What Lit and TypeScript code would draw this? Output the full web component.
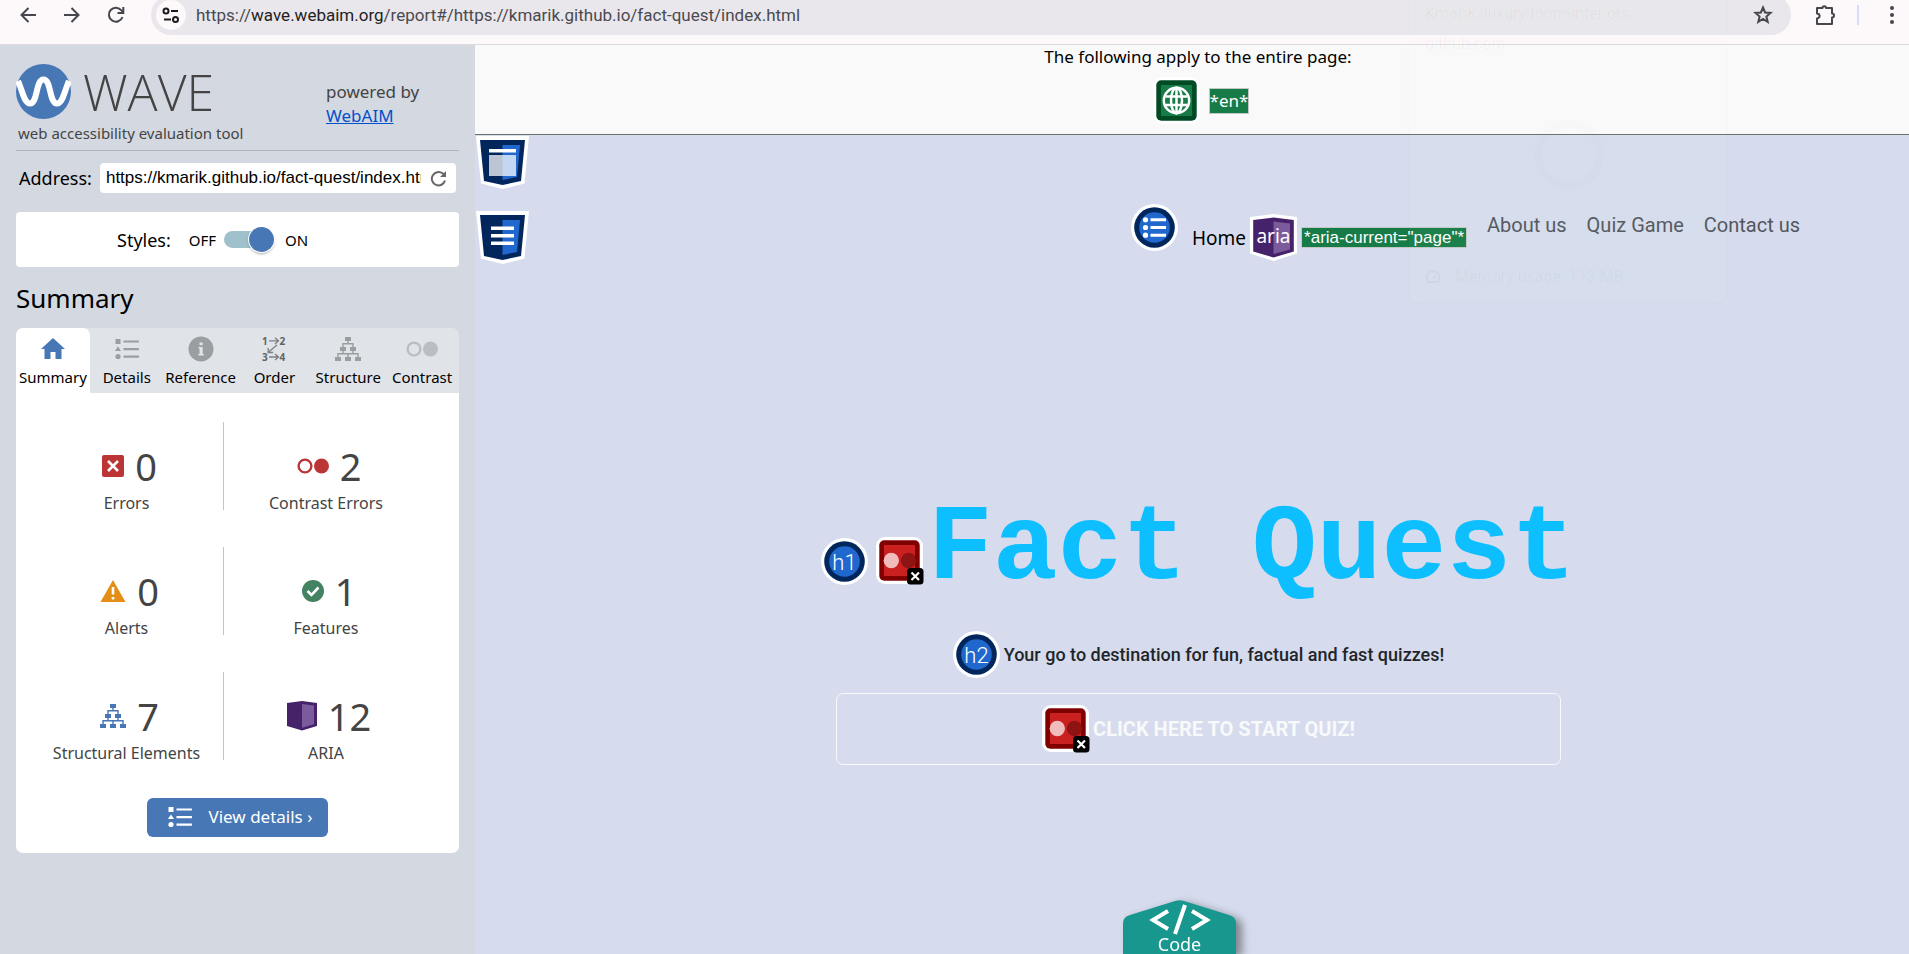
import { LitElement, html, svg, css } from "lit";
import { customElement, property, state } from "lit/decorators.js";

const listShapes = svg`
  <path d="M0 0h5v5H0zM2.5 7.5L5.6 12H-.6z" /><circle cx="2.5" cy="17.5" r="2.6" />
  <path d="M8 1.4h15.400v2.200H8zM8 9h15.400v2.200H8zM8 16.600h15.400v2.200H8z" />`;

const treeShapes = svg`
  <path d="M10 0h6v4h-6zM5 10h6v4H5zM15 10h6v4h-6zM0 20h6v4H0zM10 20h6v4h-6zM20 20h6v4h-6z" />
  <path d="M13 4v3M8 10V6.800h10V10M8 14v3M18 14v3M3 20v-3.200h20V20M13 17v3" fill="none" stroke="currentColor" stroke-width="1.400" />`;

const icons: Record<string, unknown> = {
  home: html`<svg width="26" height="24" viewBox="0 0 26 24" fill="currentColor"><path d="M13 1L25 12h-3.500v10H15.500v-7h-5v7H4.500V12H1z" /></svg>`,
  list: html`<svg width="26" height="22" viewBox="-1 -1 25 22" fill="currentColor">${listShapes}</svg>`,
  info: html`<svg width="26" height="26" viewBox="0 0 26 26"><circle cx="13" cy="13" r="12.500" fill="currentColor" /><path d="M11.500 6.500h3.200v2.800h-3.200zM10.500 11h4.200v7h1.200v1.600h-5.600V18h1.200v-5.400h-1z" fill="#e0e3e8" /></svg>`,
  order: html`<svg width="28" height="30" viewBox="-1 -2 28 30" fill="#616466" font-family="Noto Sans, sans-serif" font-weight="700" font-size="10"><text x="1" y="8.500">1</text><text x="18.500" y="8.500">2</text><text x="1" y="24.500">3</text><text x="18.500" y="24.500">4</text><path d="M8 4.800h9.500M14 1.800l3.500 3L14 8M8 21h9.500M14 18l3.500 3-3.500 3M16 9l-9 7.500M7.200 12v4.500h5" fill="none" stroke="#7d8082" stroke-width="1.300" /></svg>`,
  tree: html`<svg width="26" height="24" viewBox="0 0 26 24" fill="currentColor">${treeShapes}</svg>`,
  contrast: html`<svg width="32" height="16" viewBox="0 0 32 16"><circle cx="8" cy="8" r="6.400" fill="none" stroke="currentColor" stroke-width="2.400" /><circle cx="24.500" cy="8" r="7.500" fill="currentColor" /></svg>`,
  error: html`<svg width="22" height="22" viewBox="0 0 22 22"><rect width="22" height="22" rx="2" fill="#bb3537" /><path d="M6 6l10 10M16 6L6 16" stroke="#fff" stroke-width="2.600" /></svg>`,
  alert: html`<svg width="26" height="22" viewBox="0 0 26 22"><path d="M13 0l12.500 22H.5z" fill="#e48e17" /><path d="M11.700 7h2.600v7.500h-2.600zM11.700 17h2.600v2.600h-2.600z" fill="#fff" /></svg>`,
  feature: html`<svg width="22" height="22" viewBox="0 0 22 22"><circle cx="11" cy="11" r="11" fill="#448361" /><path d="M5.500 11l4 4 7-7.500" fill="none" stroke="#fff" stroke-width="2.600" /></svg>`,
  aria: html`<svg width="30" height="30" viewBox="0 0 30 30"><path d="M0 2L15 0l15 2v23l-15 4.500L0 25z" fill="#46226b" /><path d="M15 3l12 1.600v18.600l-12 3.600z" fill="#7c5b9c" /></svg>`,
};

/* Evaluation markers that are laid over the inspected page. */
const redMarker = html`<svg width="48" height="48" viewBox="0 0 48 48" role="img" aria-label="Very low contrast">
  <rect width="47" height="47" rx="9" fill="#fff" /><rect x="3.300" y="3.300" width="40.400" height="40.400" rx="5" fill="#800000" />
  <rect x="8" y="8" width="31" height="31" fill="#cb2020" /><circle cx="15.300" cy="23.500" r="7.700" fill="#f0bcbc" /><circle cx="32.500" cy="23.500" r="7.700" fill="#8e1414" />
  <rect x="31" y="31" width="16.500" height="16.500" rx="3.500" /><path d="M35.500 35.500l7.500 7.500M43 35.500L35.500 43" stroke="#fff" stroke-width="2.200" /></svg>`;

const roundMarker = (inner: unknown, label: string) => html`<svg width="47" height="47" viewBox="0 0 47 47" role="img" aria-label=${label}>
  <circle cx="23.500" cy="23.500" r="23.500" fill="#fff" /><circle cx="23.500" cy="23.500" r="20.300" fill="#00265c" /><circle cx="23.500" cy="23.500" r="15.300" fill="#2068cd" />${inner}</svg>`;

const heading = (t: string) => roundMarker(svg`<text x="23.500" y="31.500" text-anchor="middle" fill="#fff" font-family="Roboto, sans-serif" font-weight="300" font-size="22">${t}</text>`, t);

const landmark = (inner: unknown, label: string) => html`<svg class="landmark" width="53" height="53" viewBox="0 0 53 53" role="img" aria-label=${label}>
  <path d="M0 0h53l-4.500 47.500L26.500 53 5 47.500z" fill="#fff" /><path d="M4 4h45l-4 41-18.500 4L8 45z" fill="#00265c" /><path d="M26.500 9H44l-3 32-14.500 3z" fill="#2068cd" />${inner}</svg>`;

@customElement("browser-bar")
export class BrowserBar extends LitElement {
  static styles = css`
    :host { display: block; background: #fdf8fa; border-bottom: 1px solid #dfdadd; padding-bottom: 9px; overflow: hidden; font-family: Roboto, sans-serif; }
    .row { display: flex; align-items: center; height: 40px; margin-top: -5px; padding: 0 1px 0 6px; }
    .icon { border: 0; padding: 0; background: none; display: grid; place-items: center; width: 44px; height: 32px; flex: none; color: #46464f; }
    .icon svg { fill: none; stroke: currentColor; stroke-width: 2; }
    .pill { flex: 1; display: flex; align-items: center; height: 40px; margin: 0 12px 0 13px; padding-left: 5px; border-radius: 20px; background: #e9e7ec; }
    .site { width: 30px; height: 30px; border-radius: 50%; background: #fdf8fa; color: #1c1b1f; }
    .url { flex: 1; margin-left: 10px; font-size: 17px; line-height: 24px; color: #4b4a4f; white-space: nowrap; }
    .host { color: #1f1e22; }
    .bar { width: 2px; height: 20px; margin: 0 17px 0 10px; background: #d8def8; }
    .menu { width: 32px; }
    .menu svg { fill: currentColor; stroke: none; }
    .star { margin-right: 6px; }
  `;
  render() {
    return html`<div class="row">
      <button class="icon" aria-label="Back"><svg width="18" height="18" viewBox="0 0 18 18"><path d="M17 9H2.500M9.500 2L2.500 9l7 7" /></svg></button>
      <button class="icon" aria-label="Forward"><svg width="18" height="18" viewBox="0 0 18 18"><path d="M1 9h14.500M8.500 2l7 7-7 7" /></svg></button>
      <button class="icon" aria-label="Reload"><svg width="18" height="18" viewBox="0 0 18 18"><path d="M15.500 11A7 7 0 1 1 14.500 4.500L16 6.500M16.300 1v6H10.500" /></svg></button>
      <div class="pill">
        <button class="icon site" aria-label="Site information"><svg width="18" height="16" viewBox="0 0 18 16"><circle cx="4" cy="4" r="2.500" /><path d="M9 4h7M2 12.500h7" /><circle cx="13.500" cy="12.500" r="2.500" /></svg></button>
        <span class="url">https://<span class="host">wave.webaim.org</span>/report#/https://kmarik.github.io/fact-quest/index.html</span>
        <button class="icon star" aria-label="Bookmark"><svg width="20" height="20" viewBox="0 0 20 20"><path d="M10 2.500l2.100 5 5.400.400-4.100 3.600 1.300 5.300L10 14l-4.700 2.800 1.300-5.300-4.100-3.600 5.400-.4z" /></svg></button>
      </div>
      <button class="icon" aria-label="Extensions"><svg width="22" height="22" viewBox="0 0 22 22"><path d="M3 4h5.500a1.500 1.500 0 0 1 3.500 0h6v5.500a1.500 1.500 0 0 1 0 4V20H3v-5.500c3.500-.5 3.500-4.500 0-5z" stroke-linejoin="round" /></svg></button>
      <span class="bar"></span>
      <button class="icon menu" aria-label="Menu"><svg width="6" height="20" viewBox="0 0 6 20"><circle cx="3" cy="3" r="2" /><circle cx="3" cy="10" r="2" /><circle cx="3" cy="17" r="2" /></svg></button>
    </div>`;
  }
}

interface Stat { icon: string; count: number; label: string; tone?: string }

@customElement("wave-sidebar")
export class WaveSidebar extends LitElement {
  @state() private tab = "Summary";
  private tabs = [
    ["Summary", "home"], ["Details", "list"], ["Reference", "info"],
    ["Order", "order"], ["Structure", "tree"], ["Contrast", "contrast"],
  ];
  private stats: Stat[] = [
    { icon: "error", count: 0, label: "Errors" },
    { icon: "contrast", count: 2, label: "Contrast Errors", tone: "red" },
    { icon: "alert", count: 0, label: "Alerts" },
    { icon: "feature", count: 1, label: "Features" },
    { icon: "tree", count: 7, label: "Structural Elements", tone: "blue" },
    { icon: "aria", count: 12, label: "ARIA" },
  ];
  static styles = css`
    :host { display: block; box-sizing: border-box; padding: 19px 16px; background: #d4d8e0; color: #000; }
    .brand { display: flex; justify-content: space-between; border-bottom: 1px solid #b1b5b9; padding-bottom: 5px; color: #444; }
    .name { display: flex; align-items: center; gap: 12px; height: 55px; margin-bottom: 3px; font: 300 50px/56px "Open Sans", sans-serif; }
    .tag { margin-left: 2px; font-size: 15px; line-height: 23px; }
    .powered { width: 133px; padding-top: 16px; font-size: 17px; line-height: 24px; }
    .powered a { display: block; color: #0051cb; }
    .address { display: flex; align-items: center; margin: 12px 3px 19px; font-size: 18px; line-height: 24px; }
    .field { flex: 1; min-width: 0; display: flex; align-items: center; height: 30px; margin-left: 8px; border-radius: 4px; background: #fff; }
    .field input { flex: 1; min-width: 0; border: 0; padding: 0 0 0 6px; background: none; font: 17px "Liberation Sans", Arial, sans-serif; color: #000; }
    .field button { display: grid; place-items: center; width: 35px; border: 0; padding: 0; background: none; color: #686868; }
    .styles { display: flex; align-items: center; height: 55px; padding-left: 101px; border-radius: 4px; background: #fff; font-size: 18px; }
    .styles small { font-size: 15px; margin-left: 18px; }
    .styles .on { margin-left: 11px; }
    .switch { appearance: none; display: flex; align-items: center; justify-content: flex-start; width: 50px; height: 17px; margin: 0 0 0 8px; border-radius: 9px; background: #9fc1cb; }
    .switch::before { content: ""; width: 25px; height: 25px; flex: none; border-radius: 50%; background: #4877b6; box-shadow: 0 0 0 1px #fff, 0 2px 3px #0005; }
    .switch:checked { justify-content: flex-end; }
    h2 { margin: 12px 0 11px; font-size: 26px; line-height: 38px; font-weight: 400; }
    .tabs { display: grid; grid-template-columns: repeat(6, 1fr); border-radius: 7px 7px 0 0; background: #e0e3e8; }
    .tab { display: grid; grid-template-rows: 38px 18px; justify-items: center; align-items: center; border: 0; padding: 2px 0 7px; border-radius: 7px 7px 0 0; background: none; color: #9a9ea1; font: inherit; font-size: 15px; line-height: 18px; white-space: nowrap; min-width: 0; }
    .tab span { color: #000; }
    .tab.contrast { color: #babdc1; }
    .tab.active { background: #fff; color: #4877b6; }
    .panel { padding: 29px 31px 16px 14px; border-radius: 0 0 7px 7px; background: #fff; }
    .stats { display: grid; grid-template-columns: 194fr 204fr; row-gap: 37px; margin: 0; padding: 0; list-style: none; }
    .stat { height: 88px; box-sizing: border-box; padding-top: 23px; text-align: center; color: #444; font-size: 16px; line-height: 24px; white-space: nowrap; }
    .stat:nth-child(odd) { border-right: 1px solid #c4c4c4; }
    .figure { display: flex; align-items: center; justify-content: center; gap: 11px; height: 42px; margin: 0 0 4px 6px; font-size: 38px; line-height: 42px; }
    .red { color: #bb3537; }
    .blue { color: #4877b6; }
    .figure i { display: flex; }
    .details { display: flex; align-items: center; justify-content: center; gap: 16px; width: 181px; height: 39px; margin: 38px 0 0 117px; border: 0; border-radius: 6px; background: #4877b6; color: #fff; font: inherit; font-size: 17px; line-height: 24px; white-space: nowrap; padding: 0 0 2px 4px; }
  `;
  render() {
    return html`
      <div class="brand">
        <div>
          <div class="name"><svg width="55" height="55" viewBox="0 0 55 55" aria-hidden="true"><circle cx="27.500" cy="27.500" r="27.500" fill="#4877b6" /><path d="M2 17C6 25 8 39.500 14 39.500C22 39.500 19.500 15.500 27.500 15.500S33 39.500 41 39.500C47 39.500 49 25 53 17" fill="none" stroke="#fff" stroke-width="6" /></svg>WAVE</div>
          <div class="tag">web accessibility evaluation tool</div>
        </div>
        <div class="powered">powered by <a href="#webaim">WebAIM</a></div>
      </div>
      <div class="address">
        <label for="address">Address:</label>
        <div class="field"><input id="address" type="text" value="https://kmarik.github.io/fact-quest/index.html" />
          <button aria-label="Evaluate"><svg width="17" height="17" viewBox="0 0 17 17" fill="none" stroke="currentColor" stroke-width="2"><path d="M15 10.500A6.700 6.700 0 1 1 12.500 3.300L14.500 5" /><path d="M16 1v6h-6z" fill="currentColor" stroke="none" /></svg></button></div>
      </div>
      <div class="styles"><label for="styles">Styles:</label><small>OFF</small><input class="switch" id="styles" type="checkbox" checked /><small class="on">ON</small></div>
      <h2>Summary</h2>
      <div class="tabs" role="tablist">${this.tabs.map(([name, icon]) => html`
        <button class="tab ${icon} ${this.tab === name ? "active" : ""}" role="tab" aria-selected=${this.tab === name} @click=${() => (this.tab = name)}>${icons[icon]}<span>${name}</span></button>`)}
      </div>
      <div class="panel">
        <ul class="stats">${this.stats.map((s) => html`
          <li class="stat"><div class="figure"><i class=${s.tone ?? ""}>${icons[s.icon]}</i>${s.count}</div>${s.label}</li>`)}
        </ul>
        <button class="details">${icons.list} View details ›</button>
      </div>`;
  }
}

@customElement("page-preview")
export class PagePreview extends LitElement {
  static styles = css`
    :host { display: block; position: relative; background: #d6dcee; overflow: hidden; }
    svg { display: block; flex: none; }
    .global { height: 90px; box-sizing: border-box; padding-left: 12px; background: #f9f9f9; border-bottom: 1px solid #67746b; text-align: center; font-size: 17px; line-height: 24px; }
    .marks { display: flex; justify-content: center; align-items: center; gap: 9px; margin: 8px 0 0 6px; }
    .note { border: 1px solid #c3c8c4; background: #177b48; color: #fff; line-height: 24px; }
    .landmark { margin-left: 1px; }
    .top { padding-top: 1px; }
    .menu { display: flex; justify-content: space-between; align-items: flex-start; padding: 15px 109px 0 0; }
    .menu .landmark { margin-top: 7px; }
    nav { display: flex; align-items: flex-start; font: 20px/24px Roboto, sans-serif; }
    nav a { color: #53565d; text-decoration: none; margin: 9px 0 0 20px; white-space: nowrap; }
    nav .current { display: flex; align-items: center; gap: 4px; margin: 10px 0 0 14px; color: #000; font-family: "Noto Sans", sans-serif; font-size: 19px; }
    nav .note { padding: 0 2px; font: 17px/19px "Liberation Sans", Arial, sans-serif; }
    .hero { display: flex; flex-direction: column; align-items: center; padding: 249px 0 0 13px; font-family: Roboto, sans-serif; }
    h1, h2 { display: flex; margin: 0; gap: 4px; white-space: nowrap; }
    h1 { align-items: flex-end; color: #0dbfff; font: 700 108px/72px "Liberation Mono", monospace; }
    h1 svg:first-child { margin-right: 4px; }
    h2 { align-items: center; margin: 46px 0 15px; color: #212529; font-size: 18px; line-height: 24px; font-weight: 500; }
    .start { display: flex; align-items: center; justify-content: center; gap: 3px; width: 51%; height: 72px; border: 1px solid #f8f9fa; border-radius: 7px; background: none; color: #f8f9fa; font: 700 20px/24px Roboto, sans-serif; }
    .code { position: absolute; left: 648px; bottom: 0; width: 113px; height: 54px; border: 0; padding: 0; background: none; filter: drop-shadow(6px 3px 4px #0006); color: #fff; font: inherit; font-size: 18px; line-height: 18px; }
    .code span { position: absolute; left: 0; right: 0; bottom: 1px; }
  `;
  render() {
    return html`
      <div class="global">The following apply to the entire page:
        <div class="marks">
          <svg width="47" height="47" viewBox="0 0 47 47" role="img" aria-label="Language"><rect width="47" height="47" rx="9" fill="#fff" /><rect x="3.300" y="3.300" width="40.400" height="40.400" rx="5" fill="#004b23" /><rect x="8" y="8" width="31" height="31" fill="#177b48" /><g fill="none" stroke="#fff" stroke-width="2.500"><circle cx="23.500" cy="23.500" r="12.700" /><ellipse cx="23.500" cy="23.500" rx="5.500" ry="12.700" /><path d="M23.500 11v25M12.500 19.500h22M12.500 28h22" /></g></svg>
          <span class="note">*en*</span>
        </div>
      </div>
      <div class="top">${landmark(svg`<path d="M13 13h27v3.500H13z" fill="#fff" /><path d="M13 19h27v21H13z" fill="#fffb" />`, "Header")}</div>
      <div class="menu">
        ${landmark(svg`<path d="M15 15.500h23v3.600H15zM15 23h23v3.600H15zM15 30.500h23v3.600H15z" fill="#fff" />`, "Navigation")}
        <nav>
          ${roundMarker(svg`<g fill="#fff"><circle cx="14.500" cy="15.800" r="2.600" /><circle cx="14.500" cy="23.500" r="2.600" /><circle cx="14.500" cy="31.200" r="2.600" /><path d="M19.500 14.300H35v3H19.500zM19.500 22H35v3H19.500zM19.500 29.700H35v3H19.500z" /></g>`, "Unordered list")}
          <a class="current" href="#home" aria-current="page">Home
            <svg width="47" height="47" viewBox="0 0 47 47" role="img" aria-label="ARIA"><path d="M0 3L23.500 0 47 3v36.500L23.500 47 0 39.500z" fill="#fff" /><path d="M3.200 6L23.500 3.500 43.800 6v31.500l-20.300 6-20.300-6z" fill="#46226b" /><path d="M23.500 7.500L40 9.500v26l-16.500 4.500z" fill="#7c5b9c" /><text x="23.500" y="28.500" text-anchor="middle" fill="#fff" font-size="19">aria</text></svg>
            <span class="note">*aria-current="page"*</span></a>
          <a href="#about">About us</a><a href="#quiz">Quiz Game</a><a href="#contact">Contact us</a>
        </nav>
      </div>
      <div class="hero">
        <h1>${heading("h1")}${redMarker}<span>Fact Quest</span></h1>
        <h2>${heading("h2")}Your go to destination for fun, factual and fast quizzes!</h2>
        <button class="start">${redMarker}CLICK HERE TO START QUIZ!</button>
      </div>
      <button class="code"><svg width="113" height="54" viewBox="0 0 113 54" aria-hidden="true"><path d="M0 54V23q0-6 7-8L52 1q4.500-1.500 9 0l45 14q7 2 7 8v31z" fill="#18978f" /><path d="M45 11L30 20l15 9M69 11l15 9-15 9M62 5L52 34" fill="none" stroke="#fff" stroke-width="4" /></svg><span>Code</span></button>`;
  }
}

@customElement("fading-card")
export class FadingCard extends LitElement {
  static styles = css`
    :host { position: absolute; top: -20px; left: 1409px; width: 317px; height: 323px; box-sizing: border-box; padding: 22px 16px 14px; border-radius: 8px; background: #eef2e808; box-shadow: 0 0 3px #00000008; color: #00000009; font: 16px/24px Roboto, sans-serif; pointer-events: none; display: flex; flex-direction: column; }
    .site { margin-top: 6px; }
    .globe { margin: 64px auto auto 109px; opacity: 0.300; }
    .usage { display: flex; align-items: center; gap: 14px; }
  `;
  render() {
    return html`<div>KmariK/luxury-loom-interiors</div><div class="site">github.com</div>
      <svg class="globe" width="70" height="70" viewBox="0 0 70 70" fill="none" stroke="currentColor" stroke-width="8"><circle cx="35" cy="35" r="31" /></svg>
      <div class="usage"><svg width="16" height="14" viewBox="0 0 16 14" fill="none" stroke="currentColor" stroke-width="2"><path d="M3 12a6.500 6.500 0 1 1 10 0zM8 9l3-4" /></svg>Memory usage: 113 MB</div>`;
  }
}

@customElement("app-root")
export class AppRoot extends LitElement {
  @property() label = "WAVE report";
  static styles = css`
    :host { display: flex; flex-direction: column; position: relative; height: 100vh; overflow: hidden; font-family: "Noto Sans", "Open Sans", sans-serif; }
    .report { flex: 1; display: grid; grid-template-columns: 475px 1fr; min-height: 0; }
  `;
  render() {
    return html`<browser-bar></browser-bar>
      <main class="report" aria-label=${this.label}><wave-sidebar></wave-sidebar><page-preview></page-preview></main>
      <fading-card></fading-card>`;
  }
}
